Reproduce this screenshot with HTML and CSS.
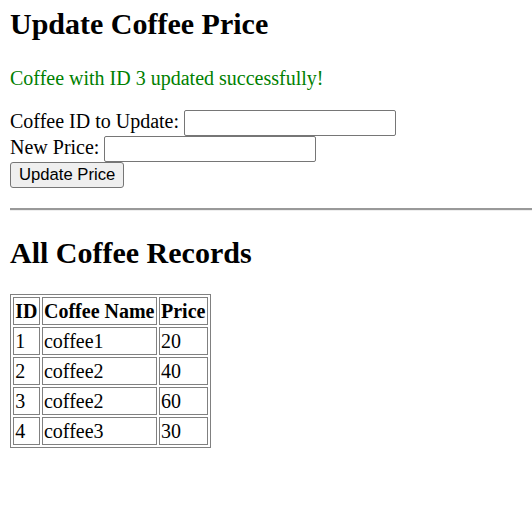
FILE: index.html
```html
<!DOCTYPE html>
<html>
<head>
<meta charset="utf-8">
<title>Update Coffee Price</title>
<link rel="stylesheet" href="styles.css">
</head>
<body>
<h2 class="title">Update Coffee Price</h2>
<p class="success">Coffee with ID 3 updated successfully!</p>
<form class="form">
<label class="label">Coffee ID to Update:</label> <input class="field" type="text"><br>
<label class="label">New Price:</label> <input class="field" type="text"><br>
<button class="btn" type="button">Update Price</button>
</form>
<hr class="rule">
<h2 class="title title-records">All Coffee Records</h2>
<table class="records">
<tr><th>ID</th><th>Coffee Name</th><th>Price</th></tr>
<tr><td>1</td><td>coffee1</td><td>20</td></tr>
<tr><td>2</td><td>coffee2</td><td>40</td></tr>
<tr><td>3</td><td>coffee2</td><td>60</td></tr>
<tr><td>4</td><td>coffee3</td><td>30</td></tr>
</table>
</body>
</html>
```

FILE: styles.css
```css
html, body {
  margin: 0;
  padding: 0;
  background: #fff;
}
body {
  padding: 7px 0 0 10px;
  font-family: "Liberation Serif", "Times New Roman", serif;
  font-size: 20px;
  color: #000;
  overflow: hidden;
}
.title {
  font-size: 30px;
  font-weight: bold;
  margin: 0 0 26px 0;
}
.title-records {
  margin-top: 25px;
  margin-bottom: 24px;
}
.success {
  color: #008000;
  margin: 0 0 20px 0;
}
.form {
  margin: 0;
}
.field {
  font-family: Arial, "Liberation Sans", sans-serif;
  font-size: 16.67px;
  width: 206px;
  height: 22px;
  padding: 1px 2px;
  border: 1px solid #767676;
  border-radius: 2px;
  box-sizing: content-box;
  margin: 0;
  vertical-align: baseline;
}
.btn {
  font-family: Arial, "Liberation Sans", sans-serif;
  font-size: 16.67px;
  padding: 1px 8px;
  height: 26px;
  border: 1px solid #767676;
  border-radius: 3px;
  background: #efefef;
  color: #000;
  margin: 0;
}
.rule {
  margin: 20px -10px 0 0;
  border: none;
  border-top: 2px solid #999;
  border-bottom: 1px solid #eee;
  height: 0;
}
.records {
  border: 1px solid #808080;
  border-spacing: 2px;
  border-collapse: separate;
}
.records th, .records td {
  border: 1px solid #808080;
  padding: 1px 1.25px;
  text-align: left;
  height: 24px;
}
.records th {
  font-weight: bold;
}
```
